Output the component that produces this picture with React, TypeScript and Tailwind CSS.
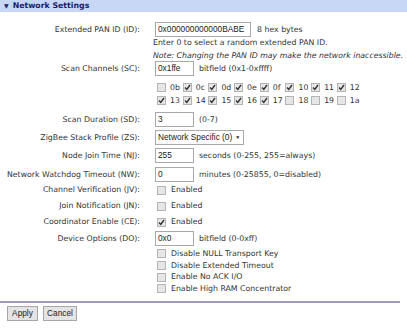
import React from "react";

const font = { fontFamily: '"DejaVu Sans", Verdana, sans-serif' };
const ctl = { fontFamily: '"Liberation Sans", Arial, sans-serif' };

function Check({ checked }: { checked?: boolean }) {
  return (
    <span className="inline-flex h-[9px] w-[9px] shrink-0 items-center justify-center border border-[#b4b4b4] bg-[#e6e6e6]">
      {checked && (
        <svg width="7" height="7" viewBox="0 0 7 7">
          <path d="M1 3.5 L2.8 5.5 L6 1" stroke="#333" strokeWidth="1.4" fill="none" />
        </svg>
      )}
    </span>
  );
}

function Input({ value, w }: { value: string; w: string }) {
  return (
    <span
      className={`inline-flex h-[15px] shrink-0 items-center border border-[#a9a9a9] bg-white pl-[2px] text-[8.3px] text-[#222] ${w}`}
      style={ctl}
    >
      {value}
    </span>
  );
}

function Row({ label, h, children }: { label?: string; h: string; children?: React.ReactNode }) {
  return (
    <div className={`flex items-center ${h}`}>
      <div className="w-[141px] shrink-0 pr-[1px] text-right">{label}</div>
      <div className="ml-[14px] flex items-center">{children}</div>
    </div>
  );
}

const channels1: [string, boolean][] = [
  ["0b", false], ["0c", true], ["0d", true], ["0e", true], ["0f", true], ["10", true], ["11", true], ["12", true],
];
const channels2: [string, boolean][] = [
  ["13", true], ["14", true], ["15", true], ["16", true], ["17", true], ["18", false], ["19", false], ["1a", false],
];

function ChanRow({ items }: { items: [string, boolean][] }) {
  return (
    <div className="flex h-[13px] items-center pl-[157px]">
      {items.map(([n, c]) => (
        <div key={n} className="flex w-[25.7px] items-center gap-[4px]">
          <Check checked={c} />
          <span>{n}</span>
        </div>
      ))}
    </div>
  );
}

export default function App() {
  return (
    <div className="h-[328px] w-[407px] overflow-hidden whitespace-nowrap bg-white text-[7.8px] leading-none text-[#333]" style={font}>
      <div className="flex h-[12px] items-center gap-[4px] bg-[#c8d7f5] pl-[4px] font-bold text-[#1a1a6b]">
        <span className="text-[6px]">▼</span>
        <span>Network Settings</span>
      </div>
      <div className="h-[10px]" />
      <Row label="Extended PAN ID (ID):" h="h-[15px]">
        <Input value="0x000000000000BABE" w="w-[96px]" />
        <span className="ml-[6px]">8 hex bytes</span>
      </Row>
      <div className="flex h-[10px] items-end pl-[153px]">Enter 0 to select a random extended PAN ID.</div>
      <div className="flex h-[14px] items-center pl-[153px] pt-[4px] italic">Note: Changing the PAN ID may make the network inaccessible.</div>
      <Row label="Scan Channels (SC):" h="h-[15px]">
        <Input value="0x1ffe" w="w-[39px]" />
        <span className="ml-[5px]">bitfield (0x1-0xffff)</span>
      </Row>
      <div className="h-[5px]" />
      <ChanRow items={channels1} />
      <ChanRow items={channels2} />
      <div className="h-[5px]" />
      <Row label="Scan Duration (SD):" h="h-[15px]">
        <Input value="3" w="w-[39px]" />
        <span className="ml-[5px]">(0-7)</span>
      </Row>
      <div className="h-[3px]" />
      <Row label="ZigBee Stack Profile (ZS):" h="h-[15px]">
        <span
          className="inline-flex h-[15px] items-center gap-[3px] border border-[#a9a9a9] bg-white pl-[2px] pr-[3px] text-[8.3px] text-[#222]"
          style={ctl}
        >
          <span>Network Specific (0)</span>
          <span className="text-[5px]">▼</span>
        </span>
      </Row>
      <div className="h-[3px]" />
      <Row label="Node Join Time (NJ):" h="h-[15px]">
        <Input value="255" w="w-[39px]" />
        <span className="ml-[5px]">seconds (0-255, 255=always)</span>
      </Row>
      <div className="h-[4px]" />
      <Row label="Network Watchdog Timeout (NW):" h="h-[15px]">
        <Input value="0" w="w-[39px]" />
        <span className="ml-[5px]">minutes (0-25855, 0=disabled)</span>
      </Row>
      <Row label="Channel Verification (JV):" h="h-[16px]">
        <span className="ml-[2px] flex items-center gap-[5px]"><Check /><span>Enabled</span></span>
      </Row>
      <Row label="Join Notification (JN):" h="h-[16px]">
        <span className="ml-[2px] flex items-center gap-[5px]"><Check /><span>Enabled</span></span>
      </Row>
      <Row label="Coordinator Enable (CE):" h="h-[16px]">
        <span className="ml-[2px] flex items-center gap-[5px]"><Check checked /><span>Enabled</span></span>
      </Row>
      <Row label="Device Options (DO):" h="h-[17px]">
        <Input value="0x0" w="w-[39px]" />
        <span className="ml-[5px]">bitfield (0-0xff)</span>
      </Row>
      <div className="flex flex-col pl-[157px] pt-[1px]">
        {["Disable NULL Transport Key", "Disable Extended Timeout", "Enable No ACK I/O", "Enable High RAM Concentrator"].map((t) => (
          <div key={t} className="flex h-[11.7px] items-center gap-[5px]">
            <Check />
            <span>{t}</span>
          </div>
        ))}
      </div>
      <div className="mt-[6px] h-[2px] w-[400px] bg-[#9c9ab6]" />
      <div className="flex gap-[5px] pl-[7px] pt-[3px]">
        <button className="h-[15px] w-[31px] border border-[#a6a6a6] bg-[#e4e4e4] text-[8.3px] leading-none text-[#222]" style={ctl}>Apply</button>
        <button className="h-[15px] w-[34px] border border-[#a6a6a6] bg-[#e4e4e4] text-[8.3px] leading-none text-[#222]" style={ctl}>Cancel</button>
      </div>
    </div>
  );
}
